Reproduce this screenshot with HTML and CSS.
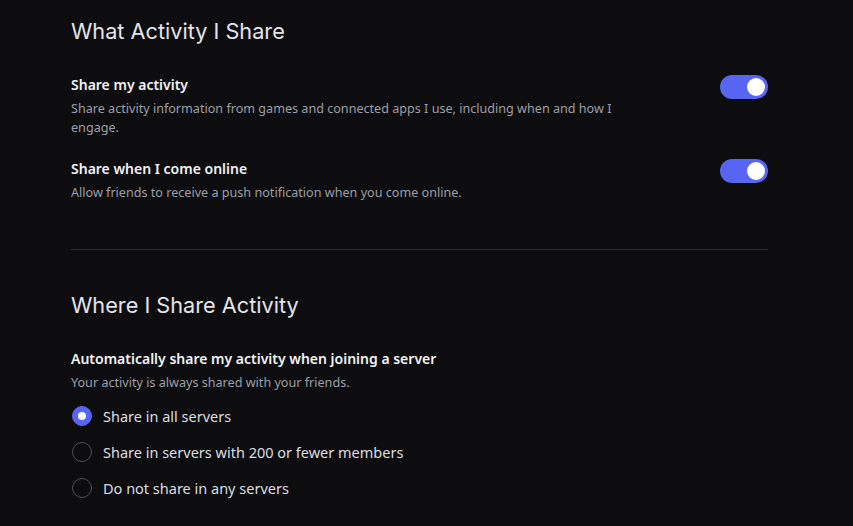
FILE: index.html
```html
<!DOCTYPE html>
<html lang="en">
  <head>
    <meta charset="UTF-8" />
    <meta name="viewport" content="width=device-width, initial-scale=1.0" />
    <title>Activity Privacy</title>
    <link rel="stylesheet" href="styles.css">
  </head>
  <body>
    <div class="container">
      <h2 class="section-title">What Activity I Share</h2>

      <div class="setting">
        <div class="setting-text">
          <div class="setting-label">Share my activity</div>
          <div class="setting-desc">
            Share activity information from games and connected apps I use, including when and how I engage.
          </div>
        </div>
        <label class="switch">
          <input type="checkbox" checked />
          <span class="knob"></span>
        </label>
      </div>

      <div class="setting">
        <div class="setting-text">
          <div class="setting-label">Share when I come online</div>
          <div class="setting-desc">
            Allow friends to receive a push notification when you come online.
          </div>
        </div>
        <label class="switch">
          <input type="checkbox" checked />
          <span class="knob"></span>
        </label>
      </div>

      <hr class="divider" />

      <h2 class="section-title">Where I Share Activity</h2>

      <div class="setting-label">Automatically share my activity when joining a server</div>
      <div class="setting-desc">Your activity is always shared with your friends.</div>

      <div class="radio-group">
        <label class="radio">
          <input type="radio" name="share" checked />
          <span class="dot"></span>
          Share in all servers
        </label>
        <label class="radio">
          <input type="radio" name="share" />
          <span class="dot"></span>
          Share in servers with 200 or fewer members
        </label>
        <label class="radio">
          <input type="radio" name="share" />
          <span class="dot"></span>
          Do not share in any servers
        </label>
      </div>
    </div>
  </body>
</html>
```

FILE: styles.css
```css
body {
  margin: 0;
  background: #0d0d10;
  font-family: "Noto Sans", "Open Sans", sans-serif;
  color: #dbdee1;
}
.container {
  width: 697px;
  margin-left: 71px;
  padding-top: 17px;
}
.section-title {
  margin: 0 0 30px;
  font-family: Inter, "Noto Sans", sans-serif;
  font-size: 21.7px;
  font-weight: 400;
  line-height: 28px;
  color: #e3e4e8;
}
.setting {
  display: flex;
  justify-content: space-between;
  align-items: flex-start;
  margin-bottom: 22px;
}
.setting-text {
  max-width: 560px;
}
.setting-label {
  font-size: 14px;
  font-weight: 600;
  line-height: 20px;
  color: #f2f3f5;
  margin-bottom: 4px;
}
.setting-desc {
  font-size: 12.6px;
  line-height: 19px;
  color: #9d9ea6;
}
.switch {
  position: relative;
  width: 48px;
  height: 24px;
  flex-shrink: 0;
}
.switch input {
  display: none;
}
.knob {
  display: block;
  width: 48px;
  height: 24px;
  border-radius: 12px;
  background: #5865f2;
  position: relative;
}
.knob::after {
  content: "";
  position: absolute;
  top: 3px;
  right: 3px;
  width: 18px;
  height: 18px;
  border-radius: 50%;
  background: #fff;
}
.divider {
  border: 0;
  border-top: 1px solid #2a2a2f;
  margin: 47px 0 41px;
}
.radio-group {
  display: flex;
  flex-direction: column;
  gap: 12px;
  margin-top: 12px;
}
.radio {
  display: flex;
  align-items: center;
  gap: 11px;
  height: 24px;
  font-size: 14.5px;
  color: #dbdee1;
  margin-left: 1px;
}
.radio input {
  display: none;
}
.dot {
  width: 18px;
  height: 18px;
  border-radius: 50%;
  border: 1px solid #4e5058;
  position: relative;
}
.radio input:checked + .dot {
  border-color: #5865f2;
  background: #5865f2;
}
.radio input:checked + .dot::after {
  content: "";
  position: absolute;
  top: 5px;
  left: 5px;
  width: 8px;
  height: 8px;
  border-radius: 50%;
  background: #fff;
}
```
